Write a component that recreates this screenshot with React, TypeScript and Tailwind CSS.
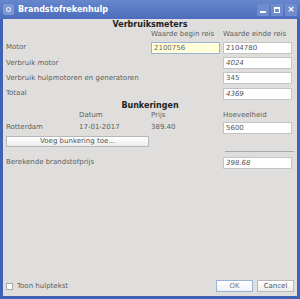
import { ReactNode } from "react"

const font = { fontFamily: '"DejaVu Sans", sans-serif' }

function Field({ value, italic, focused }: { value: string; italic?: boolean; focused?: boolean }) {
  return (
    <div
      className={
        "h-[12px] w-[69px] border px-[2px] text-[7px] leading-[10px] " +
        (focused ? "border-[#9ab4d8] bg-[#ffffdc] text-[#6a6a5a]" : "border-[#c4c4c4] bg-white text-[#555]") +
        (italic ? " italic text-[#8a8a8a]" : "")
      }
    >
      {value}
    </div>
  )
}

function Row({ children }: { children: ReactNode }) {
  return <div className="grid h-[15.3px] grid-cols-[145px_72px_69px] items-center">{children}</div>
}

export default function App() {
  return (
    <div className="flex h-[299px] w-[300px] flex-col bg-[#3f62b4] text-[7px] text-[#5e5e5e]" style={font}>
      {/* Title bar */}
      <div className="flex h-[19px] items-center bg-gradient-to-b from-[#6687cc] to-[#4b6dbb] px-[3px]">
        <div className="flex h-[11px] w-[11px] items-center justify-center rounded-[2px] bg-[#7d98d4]">
          <div className="h-[5px] w-[5px] rounded-full border border-white" />
        </div>
        <span className="ml-[4px] text-[8px] font-bold text-white">Brandstofrekenhulp</span>
        <div className="ml-auto flex gap-[2px]">
          <div className="flex h-[12px] w-[12px] items-end justify-center bg-[#6f8ccf] pb-[3px]">
            <div className="h-[2px] w-[6px] bg-white" />
          </div>
          <div className="flex h-[12px] w-[12px] items-center justify-center bg-[#6f8ccf]">
            <div className="h-[6px] w-[6px] border border-t-2 border-white" />
          </div>
          <div className="flex h-[12px] w-[12px] items-center justify-center bg-[#6f8ccf] text-[9px] font-bold leading-none text-white">
            ×
          </div>
        </div>
      </div>

      {/* Body */}
      <div className="mx-[3px] mb-[3px] flex flex-1 flex-col bg-[#dfdedc] px-[3px]">
        <div className="mt-[1px] h-[9px] text-center text-[8px] font-bold leading-[9px] text-[#222]">Verbruiksmeters</div>
        <div className="grid h-[11px] grid-cols-[145px_72px_69px] items-center">
          <span />
          <span>Waarde begin reis</span>
          <span>Waarde einde reis</span>
        </div>
        <Row>
          <span>Motor</span>
          <Field value="2100756" focused />
          <Field value="2104780" />
        </Row>
        <Row>
          <span>Verbruik motor</span>
          <span />
          <Field value="4024" italic />
        </Row>
        <Row>
          <span>Verbruik hulpmotoren en generatoren</span>
          <span />
          <Field value="345" />
        </Row>
        <Row>
          <span>Totaal</span>
          <span />
          <Field value="4369" italic />
        </Row>

        <div className="h-[9px] text-center text-[8px] font-bold leading-[9px] text-[#222]">Bunkeringen</div>
        <div className="grid h-[11px] grid-cols-[73px_72px_72px_69px] items-center">
          <span />
          <span>Datum</span>
          <span>Prijs</span>
          <span>Hoeveelheid</span>
        </div>
        <div className="grid h-[13px] grid-cols-[73px_72px_72px_69px] items-center">
          <span>Rotterdam</span>
          <span>17-01-2017</span>
          <span>389.40</span>
          <Field value="5600" />
        </div>
        <div className="mt-[2px] flex">
          <button className="h-[11px] w-[143px] border border-[#b8b8b8] bg-gradient-to-b from-white to-[#ececec] text-[7px] leading-[9px] text-[#555]">
            Voeg bunkering toe...
          </button>
        </div>
        <div className="flex h-[9px] items-center justify-end">
          <div className="h-[1px] w-[69px] bg-[#a8a8a8]" />
        </div>
        <div className="grid h-[13px] grid-cols-[217px_69px] items-center">
          <span>Berekende brandstofprijs</span>
          <Field value="398.68" italic />
        </div>

        <div className="mt-auto mb-[4px] flex items-center">
          <div className="h-[7px] w-[7px] border border-[#aaa] bg-white" />
          <span className="ml-[4px]">Toon hulptekst</span>
          <div className="ml-auto flex gap-[4px]">
            <button className="h-[12px] w-[37px] border border-[#9ab4d8] bg-gradient-to-b from-white to-[#eef2f8] text-[7px] text-[#777]">
              OK
            </button>
            <button className="h-[12px] w-[37px] border border-[#b8b8b8] bg-gradient-to-b from-white to-[#ececec] text-[7px] text-[#555]">
              Cancel
            </button>
          </div>
        </div>
      </div>
    </div>
  )
}
